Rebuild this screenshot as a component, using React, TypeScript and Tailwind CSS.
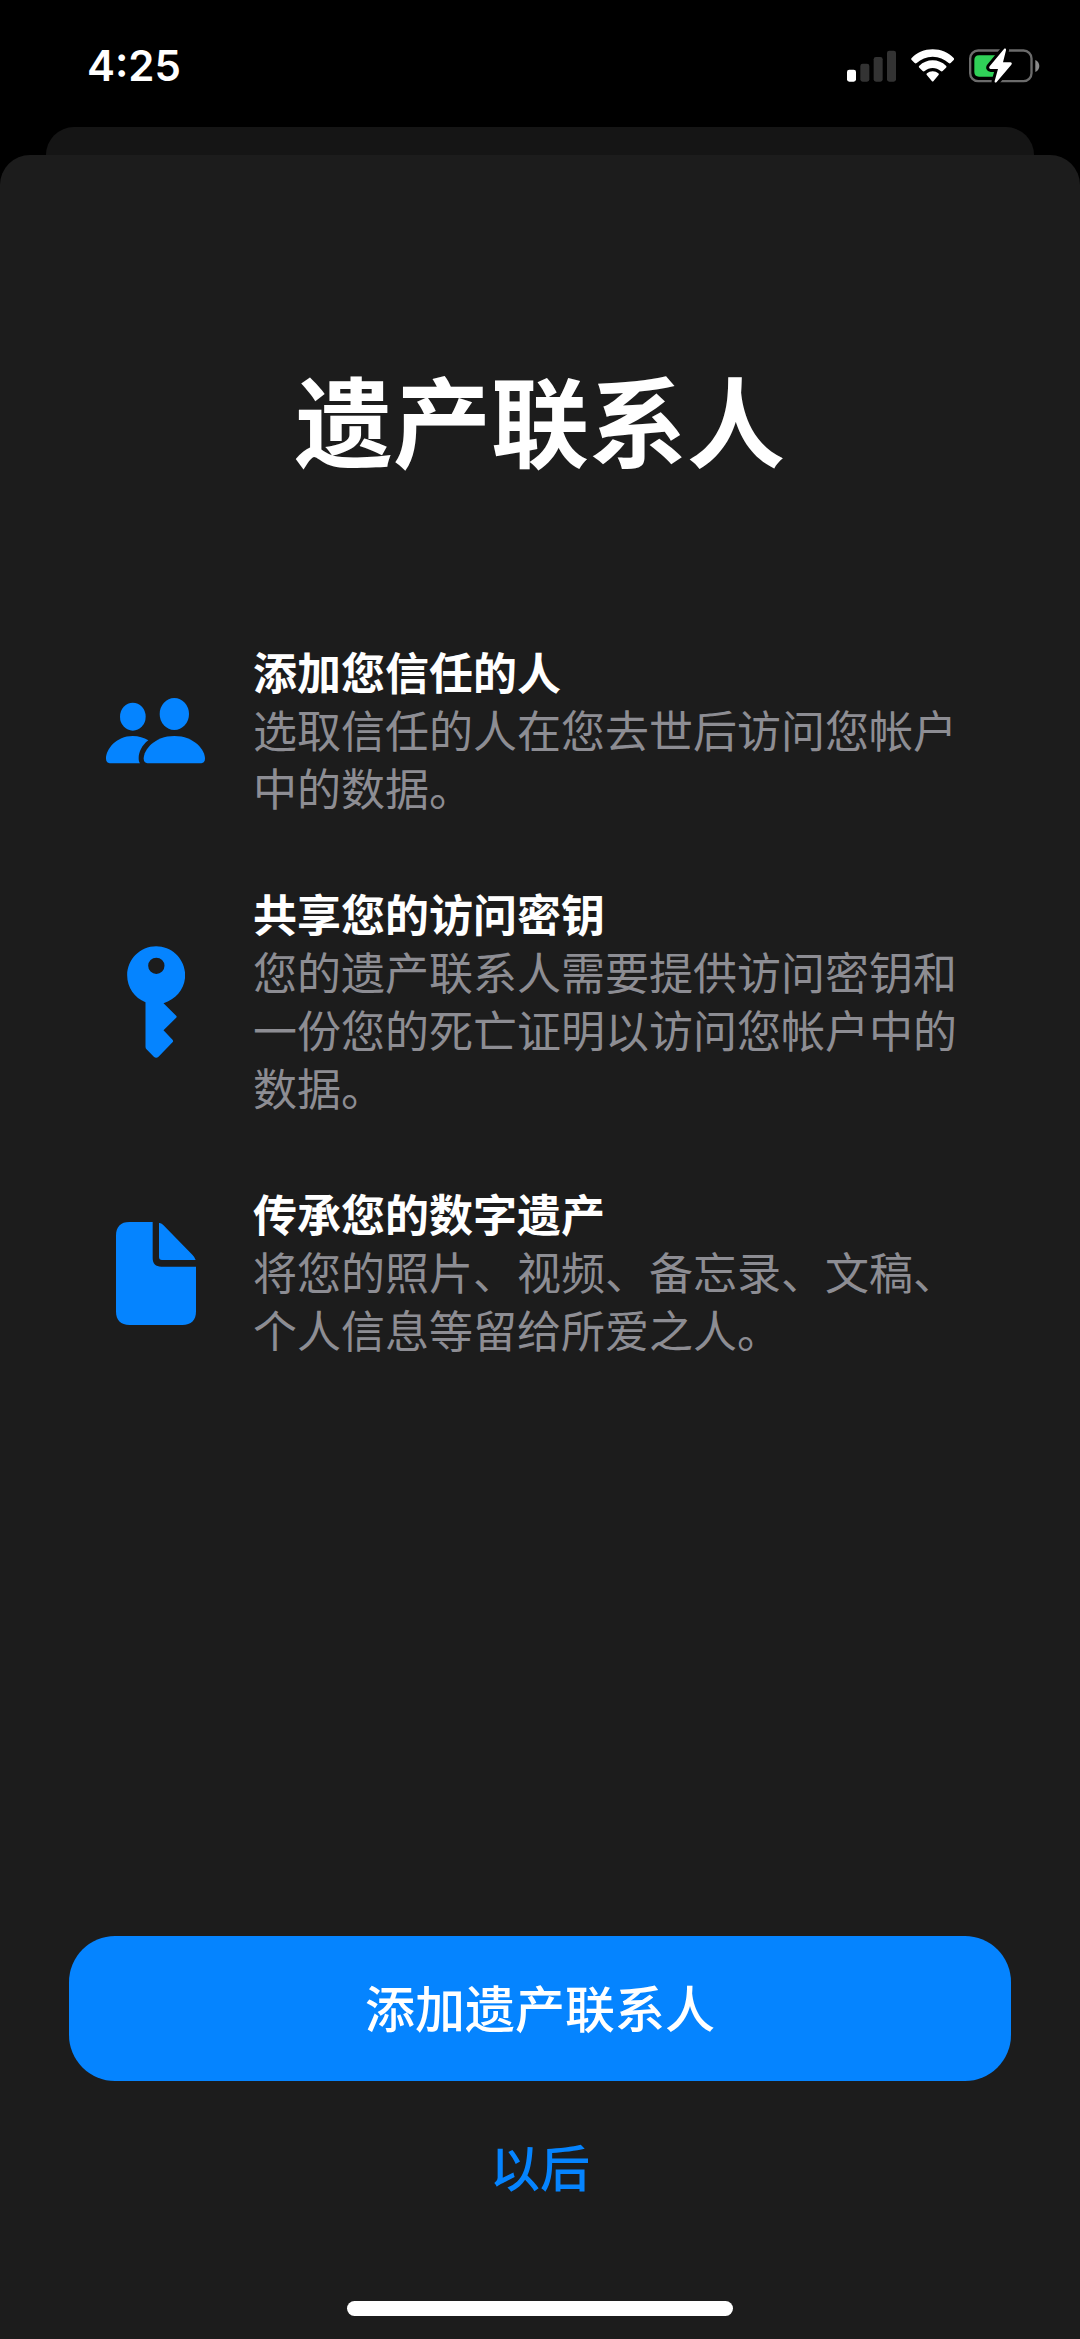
import React from 'react';

interface FeatureRowProps {
    icon: React.ReactNode;
    title: string;
    detail: string;
}

const SignalIcon = () => (
    <svg width="49" height="35" viewBox="50 55 147 105" aria-hidden="true">
        <rect x="50" y="120" width="27" height="36" rx="7" fill="#fff" />
        <rect x="90" y="102" width="27" height="54" rx="7" fill="#333" />
        <rect x="130" y="82" width="27" height="74" rx="7" fill="#333" />
        <rect x="170" y="63" width="27" height="93" rx="7" fill="#333" />
    </svg>
);

const WifiIcon = () => (
    <svg width="43" height="35" viewBox="242 55 129 105" fill="#fff" aria-hidden="true">
        <path d="M307 59c25 0 47 10 63 26 2 2 2 4 0 6l-9 9c-2 2-4 2-6 0-13-12-29-19-48-19s-35 7-48 19c-2 2-4 2-6 0l-9-9c-2-2-2-4 0-6 16-16 38-26 63-26z" />
        <path d="M307 92c15 0 29 6 40 16 2 2 2 4 0 6l-10 10c-2 2-4 2-6 0-7-6-15-9-24-9s-17 3-24 9c-2 2-4 2-6 0l-10-10c-2-2-2-4 0-6 11-10 25-16 40-16z" />
        <path d="M307 125c7 0 12 2 17 6 2 2 2 4 0 6l-15 18c-1 1-3 1-4 0l-15-18c-2-2-2-4 0-6 5-4 10-6 17-6z" />
    </svg>
);

const BatteryIcon = () => (
    <svg width="71" height="35" viewBox="416 55 213 105" aria-hidden="true">
        <rect x="419.500" y="62.500" width="184" height="92" rx="24" fill="none" stroke="#6b6b6b" strokeWidth="7" />
        <path d="M615 91c16 6 16 30 0 36z" fill="#8a8a8a" />
        <path d="M446 77h60v64h-60c-9 0-14-5-14-14v-36c0-9 5-14 14-14z" fill="#30d158" />
        <path
            d="M521 58l-43 52c-3 4-1 8 3 8h22l-10 36c-1 5 3 6 6 3l44-52c3-4 1-7-3-7h-22l9-36c1-5-3-7-6-4z"
            fill="#fff"
            stroke="#000"
            strokeWidth="18"
            strokeLinejoin="round"
            paintOrder="stroke"
        />
    </svg>
);

const PeopleIcon = () => (
    <svg width="99" height="66" viewBox="48 177 297 198" fill="currentColor" aria-hidden="true">
        <ellipse cx="128.500" cy="233" rx="38.500" ry="42" />
        <ellipse cx="253" cy="225" rx="44" ry="48" />
        <path d="M128 291c18 0 34 5 47 13-19 14-29 35-29 54 0 6 1 11 4 15H63c-10 0-15-5-15-14 0-28 30-68 80-68z" />
        <path d="M253 291c60 0 92 42 92 68 0 9-5 14-15 14H176c-10 0-15-5-15-14 0-26 32-68 92-68z" />
    </svg>
);

const KeyIcon = () => (
    <svg width="58" height="112" viewBox="109 199 174 336" fill="currentColor" aria-hidden="true">
        <path
            fillRule="evenodd"
            d="M196.500 200c48 0 87 39 87 87 0 38-26 72-65 84l38 37q3 3 0 6l-38 38 27 28q4 4 0 8l-42 43q-7 6-14 0l-22-22q-3-3-3-8V368c-33-13-55-45-55-81 0-48 39-87 87-87zm.5 34a24.500 24.500 0 1 0 0 49 24.500 24.500 0 1 0 0-49z"
        />
    </svg>
);

const DocumentIcon = () => (
    <svg width="80" height="103" viewBox="78 123 240 309" fill="currentColor" aria-hidden="true">
        <path d="M118 123h70v108c0 17 9 26 26 26h104v134c0 27-14 41-41 41H119c-27 0-41-14-41-41V164c0-27 14-41 40-41z" />
        <path d="M207 126q6-1 12 5l88 90q8 8 10 16H216q-9 0-9-9z" />
    </svg>
);

const features: FeatureRowProps[] = [
    { icon: <PeopleIcon />, title: '添加您信任的人', detail: '选取信任的人在您去世后访问您帐户中的数据。' },
    { icon: <KeyIcon />, title: '共享您的访问密钥', detail: '您的遗产联系人需要提供访问密钥和一份您的死亡证明以访问您帐户中的数据。' },
    { icon: <DocumentIcon />, title: '传承您的数字遗产', detail: '将您的照片、视频、备忘录、文稿、个人信息等留给所爱之人。' },
];

const FeatureRow: React.FC<FeatureRowProps> = ({ icon, title, detail }) => (
    <li className="flex items-center gap-12">
        <div className="flex w-[99px] shrink-0 justify-center text-[#0584ff]">{icon}</div>
        <div className="flex-1 pb-1 text-[44px] leading-[58px]">
            <h2 className="font-bold text-white">{title}</h2>
            <p className="font-normal text-[#8d8d93]">{detail}</p>
        </div>
    </li>
);

const StatusBar = () => (
    <header className="flex h-[127px] items-center justify-between pt-1 pr-10 pl-[87px]">
        <time className="font-[Inter,sans-serif] text-[42px] leading-none font-semibold text-white">4:25</time>
        <div className="flex items-center gap-[15px]">
            <SignalIcon />
            <WifiIcon />
            <BatteryIcon />
        </div>
    </header>
);

export default function App() {
    return (
        <div lang="zh-CN" className="flex min-h-screen flex-col bg-black font-['Noto_Sans_CJK_SC',sans-serif]">
            <StatusBar />
            <div className="mx-[46px] h-7 rounded-t-[28px] bg-[#151515]" />
            <main className="flex flex-1 flex-col rounded-t-[30px] bg-[#1c1c1c]">
                <h1 className="pt-[192px] text-center text-[98px] leading-[140px] font-bold text-white">遗产联系人</h1>
                <ul className="mt-[155px] flex flex-col gap-16 pr-28 pl-[106px]">
                    {features.map((feature) => (
                        <FeatureRow key={feature.title} {...feature} />
                    ))}
                </ul>
                <div className="mt-auto flex flex-col px-[69px] pt-16">
                    <button type="button" className="h-[145px] rounded-[46px] bg-[#0584ff] pb-1 text-[50px] font-medium text-white">
                        添加遗产联系人
                    </button>
                    <button type="button" className="mt-9 h-24 text-[50px] font-medium text-[#0584ff]">
                        以后
                    </button>
                </div>
                <div className="mx-auto mt-[88px] mb-[23px] h-[15px] w-[386px] rounded-full bg-white" />
            </main>
        </div>
    );
}
